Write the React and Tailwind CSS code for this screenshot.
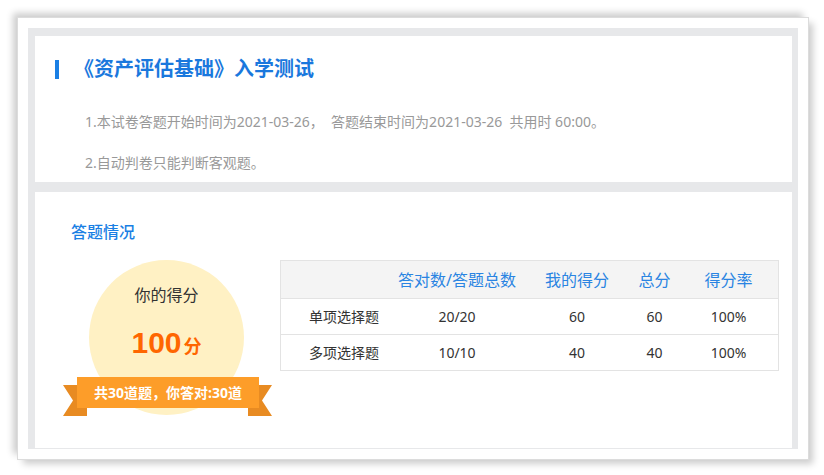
import React from "react";

const cols = [
  "w-[116px] pl-[10px]",
  "w-[120px]",
  "ml-[20px] w-[80px]",
  "w-[75px]",
  "w-[73px]",
];

const rows = [
  ["单项选择题", "20/20", "60", "60", "100%"],
  ["多项选择题", "10/10", "40", "40", "100%"],
];

const headers = ["", "答对数/答题总数", "我的得分", "总分", "得分率"];

const App = () => {
  return (
    <div className="w-[824px] h-[475px] bg-white pt-[17px] pl-[17px] font-['Noto_Sans','Noto_Sans_CJK_SC',sans-serif]">
      <div className="w-[792px] h-[443px] border border-[#dcdcdc] bg-white p-[10px] shadow-[-5px_-5px_7px_-1px_rgba(0,0,0,0.2),5px_5px_7px_-1px_rgba(0,0,0,0.2)]">
        <div className="h-[421px] bg-[#e7e8ea] pl-[7px] pr-[6px] pt-[8px] flex flex-col gap-[10px]">
          {/* Header panel */}
          <div className="h-[146px] bg-white pl-[20px] pt-[23px]">
            <div className="flex items-center">
              <div className="w-[4px] h-[19px] bg-[#1a7fe4]" />
              <h1 className="ml-[15px] text-[20px] leading-[20px] font-bold text-[#1a78dd]">
                《资产评估基础》入学测试
              </h1>
            </div>
            <p className="mt-[33px] pl-[30px] text-[14px] leading-[20px] text-[#999] whitespace-pre">
              1.本试卷答题开始时间为2021-03-26，  答题结束时间为2021-03-26  共用时 60:00。
            </p>
            <p className="mt-[21px] pl-[30px] text-[14px] leading-[20px] text-[#999]">
              2.自动判卷只能判断客观题。
            </p>
          </div>

          {/* Result panel */}
          <div className="h-[256px] bg-white pl-[36px] pt-[30px]">
            <h2 className="text-[16px] leading-[20px] font-medium text-[#1a7fe4]">答题情况</h2>
            <div className="mt-[18px] flex items-start">
              {/* Score circle */}
              <div className="relative ml-[18px] w-[155px] h-[155px] rounded-full bg-[#fff1c4] flex flex-col items-center pt-[25px]">
                <div className="text-[16px] leading-[20px] text-[#333]">你的得分</div>
                <div className="mt-[22px] flex items-baseline text-[#ff6600] font-bold">
                  <span className="text-[30px] leading-[32px] font-['Liberation_Sans',sans-serif]">100</span>
                  <span className="ml-[2px] text-[18px] leading-[20px]">分</span>
                </div>

                {/* Ribbon */}
                <svg className="absolute left-[-26px] top-[125px]" width="24" height="31" viewBox="0 0 24 31">
                  <polygon points="0,0 24,0 24,31 0,31 10,15.5" fill="#e88b22" />
                </svg>
                <svg className="absolute left-[159px] top-[125px]" width="24" height="31" viewBox="0 0 24 31">
                  <polygon points="0,0 24,0 14,15.5 24,31 0,31" fill="#e88b22" />
                </svg>
                <div className="absolute left-[-12px] top-[117px] w-[182px] h-[31px] bg-[#fd9d29] flex items-center justify-center text-white text-[14px] font-bold leading-[20px] whitespace-nowrap">
                  共30道题，你答对:30道
                </div>
              </div>

              {/* Table */}
              <div className="ml-[36px] w-[499px] border border-[#e3e3e3]">
                <div className="h-[37px] bg-[#f4f4f4] flex items-center text-[16px] text-[#2a84e2]">
                  {headers.map((h, i) => (
                    <div key={i} className={`${cols[i]} text-center leading-[20px] whitespace-nowrap`}>
                      {h}
                    </div>
                  ))}
                </div>
                {rows.map((r, ri) => (
                  <div key={ri} className="h-[36px] border-t border-[#e3e3e3] flex items-center text-[14px] text-[#333]">
                    {r.map((c, i) => (
                      <div key={i} className={`${cols[i]} text-center leading-[20px] whitespace-nowrap`}>
                        {c}
                      </div>
                    ))}
                  </div>
                ))}
              </div>
            </div>
          </div>
        </div>
      </div>
    </div>
  );
};

export default App;
